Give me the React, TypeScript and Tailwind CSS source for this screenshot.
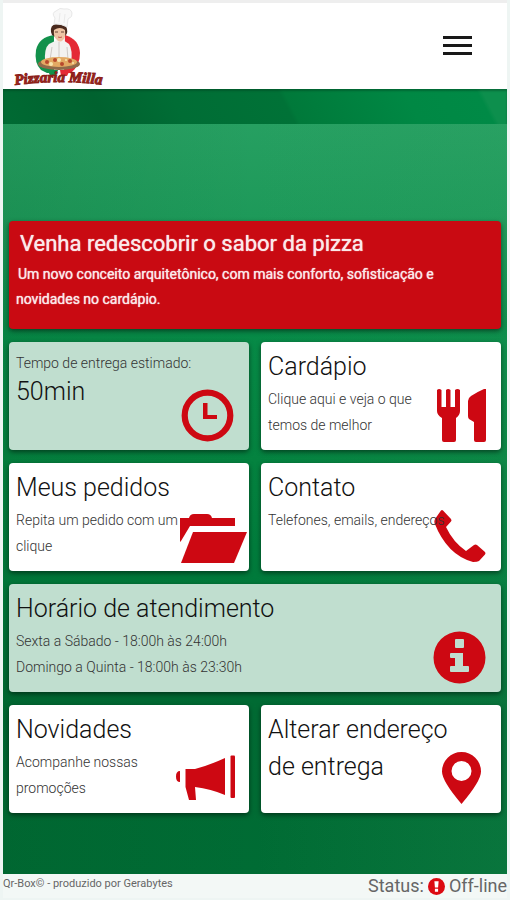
import React from 'react';
import clsx from 'clsx';

interface ICard {
    title: string;
    lines?: Array<string>;
    icon: React.ReactNode;
    href?: string;
    wide?: boolean;
    muted?: boolean;
}

const Icon: React.FC<{ children: React.ReactNode }> = ({ children }) => (
    <svg
        className="absolute right-0 bottom-1 h-[60px] w-[72px] overflow-visible fill-[#cd0812]"
        viewBox="0 0 72 60"
        aria-hidden="true"
    >
        {children}
    </svg>
);

const ClockIcon = () => (
    <Icon>
        <circle cx="30.5" cy="29.5" r="22.8" fill="none" stroke="#cd0812" strokeWidth="6.2" />
        <path d="M26 17h4.500v12H40v4H26z" />
    </Icon>
);

const CutleryIcon = () => (
    <Icon>
        <path d="M8 4q2-2 4.500 0v17H17V4q2-2 4.500 0v17H26V4q2.500-2 5 0v21q0 4-4 7v22q0 2-2 2H15q-2 0-2-2V32q-5-3-5-7z" />
        <path d="M57 3v51q0 2-2 2H47q-2 0-2-2V36l-5-3q-1-1-1-3V15q0-3 3-5 6-4 13-7z" />
    </Icon>
);

const FolderIcon = () => (
    <Icon>
        <path d="M3 11h9q1-4 5-4h13q4 0 5 4h23v8H13L4 34l-1 1z" />
        <path d="M16 25h54L57 56H4z" />
    </Icon>
);

const PhoneIcon = () => (
    <Icon>
        <path d="M14 3.500 22 12q1 1.500 0 2.500l-5 5.500q7 15 20 24l8-6q1.500-1 3 0l8 7q1 1 0 2.500l-6 6.500q-1.500 1-6 1Q18 48 5.500 16q-.5-2 .5-4l6-8.500q1-1 2 0z" />
    </Icon>
);

const InfoIcon = () => (
    <Icon>
        <path
            fillRule="evenodd"
            d="M30.500 3.500a26 26 0 1 0 0 52 26 26 0 1 0 0-52zM27 11h7q1 0 1 1v7q0 1-1 1h-7q-1 0-1-1v-7q0-1 1-1zM22 25h12v13h5q1 0 1 1v4q0 1-1 1H22q-1 0-1-1v-4q0-1 1-1h4v-8h-4q-1 0-1-1v-3q0-1 1-1z"
        />
    </Icon>
);

const BullhornIcon = () => (
    <Icon>
        <path d="M3 22v11Q-1 33-1 27.500T3 22z" />
        <path d="M8.500 20H18q15-4 30-11v37q-14-6-30-8l1 13h-7L8.500 38z" />
        <rect x="53.500" y="6.500" width="4.500" height="42.500" rx="1" />
    </Icon>
);

const PinIcon = () => (
    <Icon>
        <path
            fillRule="evenodd"
            d="M32.500 3A19.500 19.500 0 0 0 13 22.500Q13 32 32.500 55 52 32 52 22.500A19.500 19.500 0 0 0 32.500 3zm0 9a10 10 0 1 1 0 20 10 10 0 1 1 0-20z"
        />
    </Icon>
);

const Logo = () => (
    <svg className="h-[80px] w-[96px]" viewBox="0 0 96 80" role="img" aria-label="Pizzaria Milla">
        {/* flag */}
        <path d="M42 27Q27 29 24 42q-2 13 5 20l6 3h7z" fill="#12914b" />
        <path d="M53 27q14 4 15 18 0 12-9 20h-7z" fill="#e42a35" />
        {/* chef */}
        <path d="M33 55q-1-15 4-19l8-4h6l6 4q4 6 2 19z" fill="#f3f2f0" />
        <path d="M47 34v20M40 39l-2 13M55 39l1 13" stroke="#cfcac6" strokeWidth="1" fill="none" />
        <path d="M39 24q-1-7 5-8l10 2q3 7-1 10-6 4-13-1z" fill="#4a2a1d" />
        <path d="M42 22q6-4 11 0 1 8-2 10-3 3-6 0-4-3-3-10z" fill="#efc4a4" />
        <path d="M43 24h3m3 0h3" stroke="#6b4636" strokeWidth="1" />
        <path d="M46 29q2 1 4 0" stroke="#c05a50" strokeWidth="1" fill="none" />
        <path
            d="m42 16 1-6q-4-5 1-7 4-4 8-2 7-1 8 4 1 4-4 6l-1 8q-6-4-13-3z"
            fill="#f8f8f8"
            stroke="#e8e8e8"
            strokeWidth="1"
        />
        <path d="m48 5-1 9m6-8-1 9" stroke="#eaeaea" strokeWidth="1" />
        {/* pizza */}
        <ellipse cx="47" cy="56" rx="21" ry="6" fill="#8f6a4a" />
        <ellipse cx="47" cy="54" rx="18" ry="5" fill="#e3a963" />
        <g fill="#b8492d">
            <circle cx="35" cy="54" r="2" />
            <circle cx="43" cy="52" r="2" />
            <circle cx="50" cy="56" r="2" />
            <circle cx="58" cy="53" r="2" />
        </g>
        <g fill="#f7e5ae">
            <circle cx="39" cy="56" r="2" />
            <circle cx="47" cy="52" r="2" />
            <circle cx="54" cy="52" r="1" />
            <circle cx="61" cy="55" r="1" />
        </g>
        {/* ribbon */}
        <path d="M36 62h10l-2 6h-6z" fill="#12914b" />
        <path d="M48 62h10l-3 6h-6z" fill="#e42a35" />
        <path id="logo-arc" d="M3 77Q47 71 93 77" fill="none" />
        <text
            className="font-['Liberation_Serif',serif] text-[15px] font-bold italic"
            fill="#a5251b"
            stroke="#8a2018"
            strokeWidth="1"
        >
            <textPath href="#logo-arc">Pizzaria Milla</textPath>
        </text>
    </svg>
);

const cards: Array<ICard> = [
    {
        title: 'Cardápio',
        lines: ['Clique aqui e veja o que', 'temos de melhor'],
        icon: <CutleryIcon />,
        href: '#cardapio',
    },
    { title: 'Meus pedidos', lines: ['Repita um pedido com um', 'clique'], icon: <FolderIcon />, href: '#pedidos' },
    { title: 'Contato', lines: ['Telefones, emails, endereços'], icon: <PhoneIcon />, href: '#contato' },
    {
        title: 'Horário de atendimento',
        lines: ['Sexta a Sábado - 18:00h às 24:00h', 'Domingo a Quinta - 18:00h às 23:30h'],
        icon: <InfoIcon />,
        wide: true,
        muted: true,
    },
    { title: 'Novidades', lines: ['Acompanhe nossas', 'promoções'], icon: <BullhornIcon />, href: '#novidades' },
    { title: 'Alterar endereço de entrega', icon: <PinIcon />, href: '#endereco' },
];

const Card: React.FC<ICard> = ({ title, lines, icon, href, wide, muted }) => {
    const Tag = href ? 'a' : 'section';
    return (
        <Tag
            href={href}
            className={clsx(
                'relative block min-h-[108px] rounded px-[7px] pt-1.5 shadow-[0_2px_5px_rgba(0,0,0,0.5)]',
                wide && 'col-span-2',
                muted ? 'bg-[#c0decf]' : 'bg-white'
            )}
        >
            {icon}
            <h2 className="relative pr-6 text-[25px] leading-[37px] font-light text-[#111]">{title}</h2>
            {lines && (
                <p className="relative mt-px text-[14px] leading-[26px] font-light whitespace-nowrap text-[#333]">
                    {lines.map((l) => (
                        <span key={l} className="block">
                            {l}
                        </span>
                    ))}
                </p>
            )}
        </Tag>
    );
};

export default function App() {
    return (
        <div className="flex min-h-screen flex-col border-x-[3px] border-b-2 border-[#eef5f3] bg-[#f3f8f6] font-[Roboto,sans-serif]">
            <header className="flex h-[89px] items-center justify-between border-t-[3px] border-[#eeeeee] bg-white pt-1 pr-[35px] pl-[9px]">
                <a href="#inicio">
                    <Logo />
                </a>
                <button type="button" aria-label="Menu" className="pb-1.5">
                    <svg className="h-[19px] w-[29px] fill-[#181818]" viewBox="0 0 29 19">
                        <path d="M0 0h29v3H0zM0 8h29v3H0zM0 16h29v3H0z" />
                    </svg>
                </button>
            </header>
            <div className="h-[35px] bg-[linear-gradient(62deg,#006a33_0%,#00622f_20%,#006d35_35%,#007237_56%,#00793a_57%,#008844_80%,#008a46_94%,#0d8f4d_95%)] shadow-[inset_0_2px_2px_rgba(0,60,30,0.4)]" />
            <main className="flex-1 bg-[linear-gradient(90deg,rgba(0,60,25,0.1),rgba(0,50,20,0)_50%,rgba(60,170,110,0.15)),linear-gradient(178deg,#27a062_0%,#1d9959_14%,#078a47_28%,#04823f_45%,#007a3b_60%,#006a33_75%,#006c34_100%)] px-1.5 pt-[97px] pb-[61px]">
                <section className="min-h-[108px] rounded bg-[#c90a12] px-[7px] pt-1 text-[#fbe9e9] shadow-[0_2px_5px_rgba(0,0,0,0.5)]">
                    <h1 className="pl-1 text-[22px] leading-[37px] [text-shadow:0_0_1px_#fff]">
                        Venha redescobrir o sabor da pizza
                    </h1>
                    <p className="indent-0.5 text-[14px] leading-[25px] [text-shadow:0_0_1px_#fff]">
                        Um novo conceito arquitetônico, com mais conforto, sofisticação e
                        <br />
                        novidades no cardápio.
                    </p>
                </section>
                <div className="mt-[13px] grid grid-cols-2 gap-x-3 gap-y-[13px]">
                    <section className="relative min-h-[108px] rounded bg-[#c0decf] px-[7px] pt-2 shadow-[0_2px_5px_rgba(0,0,0,0.5)]">
                        <ClockIcon />
                        <p className="text-[14px] leading-[26px] font-light text-[#333]">Tempo de entrega estimado:</p>
                        <p className="text-[25px] leading-8 font-light text-[#111]">50min</p>
                    </section>
                    {cards.map((c) => (
                        <Card key={c.title} {...c} />
                    ))}
                </div>
            </main>
            <footer className="flex h-6 items-center justify-between text-[#666]">
                <small className="pb-1 text-[11px]">Qr-Box© - produzido por Gerabytes</small>
                <div className="flex items-center gap-1 text-[18px] leading-6">
                    Status:
                    <svg className="h-[17px] w-[17px]" viewBox="0 0 16 16" aria-hidden="true">
                        <circle cx="8" cy="8" r="8" fill="#dc0a12" />
                        <path d="M6 3h4l-.5 6h-3zM6.500 10h3v3h-3z" fill="#fff" />
                    </svg>
                    Off-line
                </div>
            </footer>
        </div>
    );
}
